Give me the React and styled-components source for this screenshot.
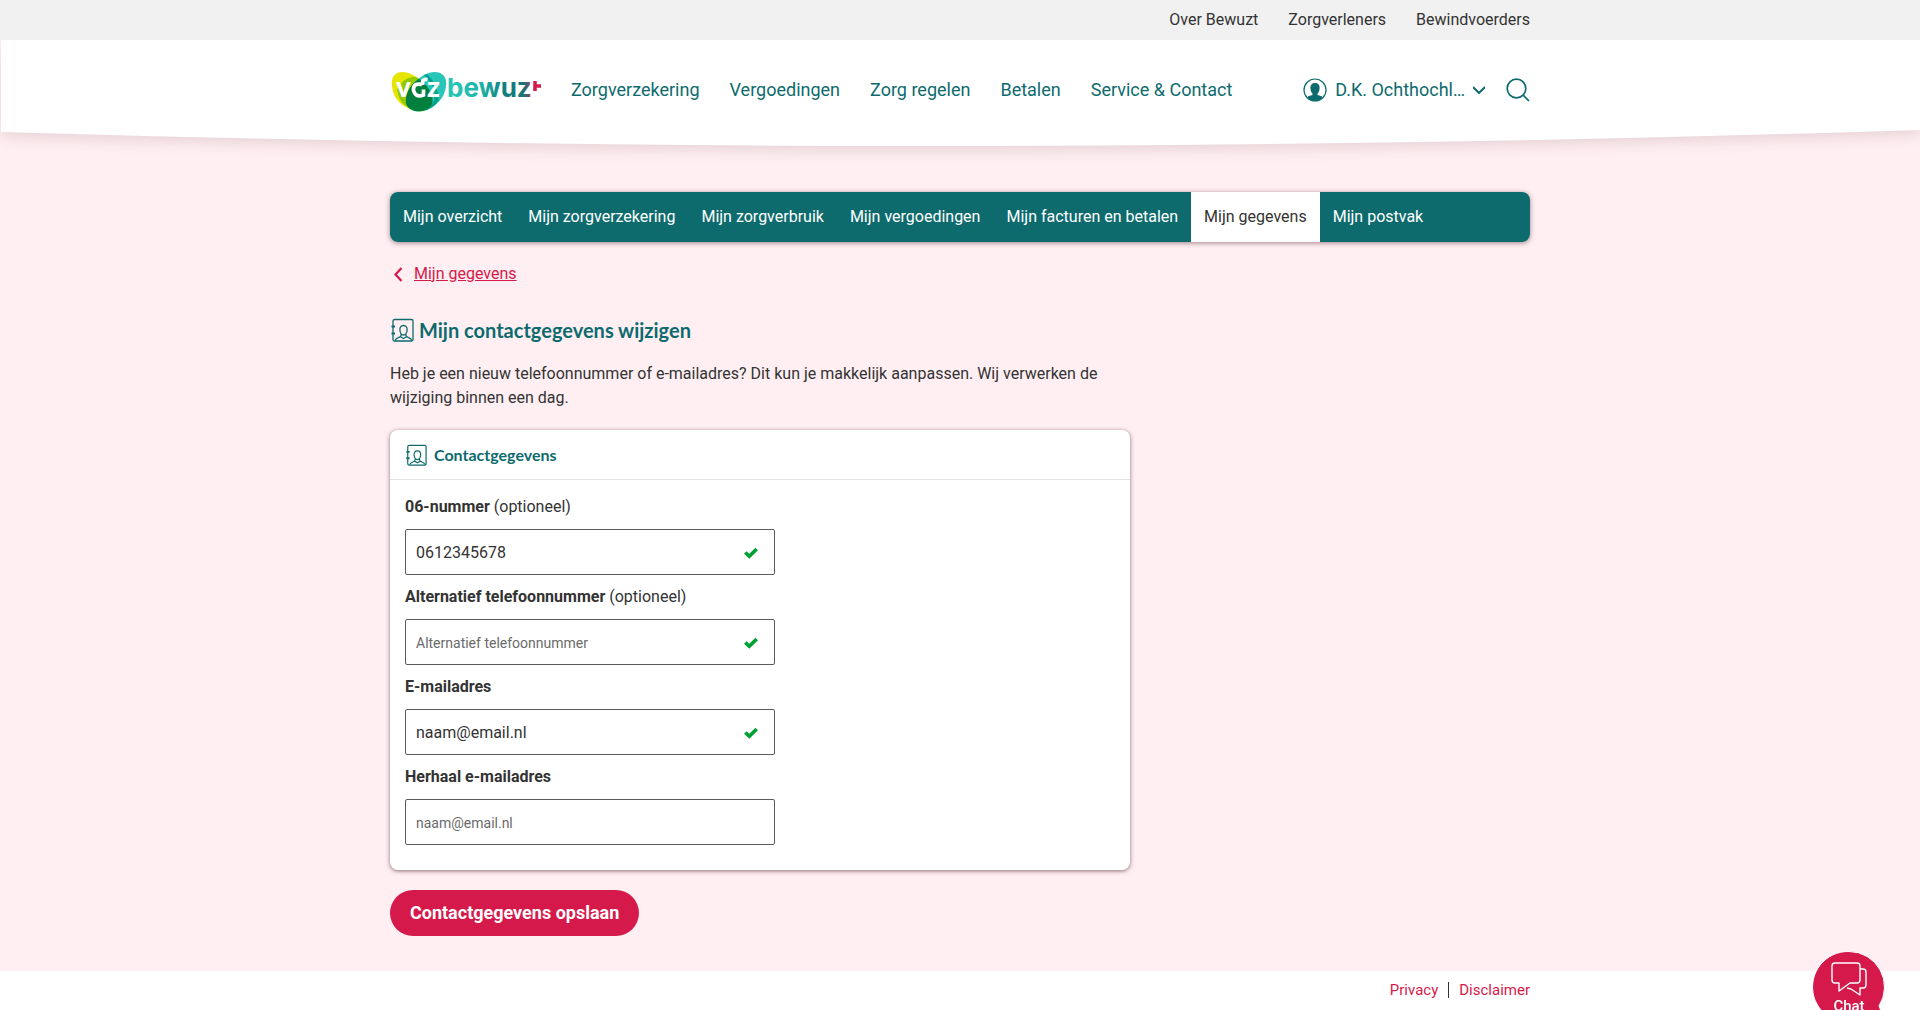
import React from "react";
import styled, { createGlobalStyle, css } from "styled-components";

const teal = "#0d6b6e";
const red = "#d51a4b";
const ink = "#333333";
const blush = "#ffeff2";

const GlobalStyle = createGlobalStyle`
  *, *::before, *::after { box-sizing: border-box; }
  html, body, #root { height: 100%; }
  body {
    margin: 0;
    background: #fff;
    color: ${ink};
    font: 400 16px/24px Roboto, "Liberation Sans", sans-serif;
  }
  a { color: inherit; text-decoration: none; }
  h1, h2, p { margin: 0; }
`;

const Page = styled.div`
  display: flex;
  flex-direction: column;
  min-height: 100%;
  overflow: hidden;
`;

const Container = styled.div`
  width: 100%;
  max-width: 1140px;
  margin: 0 auto;
`;

const TopBar = styled.div`
  background: #f1f1f1;
`;

const TopLinks = styled(Container)`
  display: flex;
  justify-content: flex-end;
  align-items: center;
  gap: 30px;
  height: 40px;
`;

const Header = styled.header`
  position: relative;
  height: 106px;
`;

const Curve = styled.svg`
  position: absolute;
  inset: 0;
  width: 100%;
  height: 100%;
  overflow: visible;
  clip-path: inset(0 0 -40px 0);
  path { fill: #fff; filter: drop-shadow(0 5px 7px rgba(60, 20, 30, 0.12)); }
`;

const HeaderRow = styled(Container)`
  position: relative;
  display: flex;
  align-items: center;
  height: 100px;
  color: ${teal};
  font-size: 18px;
`;

const LogoLink = styled.a`
  display: flex;
  margin-right: 30px;
`;

const LogoText = styled.text`
  font-family: ${(p) => (p.$mark ? "Lato" : "Inter")}, sans-serif;
  font-size: ${(p) => p.$size}px;
  font-weight: ${(p) => (p.$mark ? 900 : 700)};
`;

const MainNav = styled.nav`
  display: flex;
  gap: 30px;
  flex: 1;
`;

const AccountButton = styled.button`
  display: flex;
  align-items: center;
  gap: 8px;
  padding: 0;
  border: 0;
  background: none;
  color: inherit;
  font: inherit;
  svg { display: block; }
`;

const SearchButton = styled(AccountButton)`
  margin-left: 21px;
`;

const Main = styled.main`
  flex: 1;
  background: ${blush};
  padding: 46px 0 35px;
`;

const Tabs = styled.nav`
  display: flex;
  height: 50px;
  overflow: hidden;
  border-radius: 8px;
  background: ${teal};
`;

const TabsShadow = styled.div`
  border-radius: 8px;
  box-shadow: 0 1px 5px rgba(60, 20, 30, 0.5);
`;

const Tab = styled.a`
  display: flex;
  align-items: center;
  padding: 0 13px;
  color: #fff;
  ${(p) => p.$active && css`
    background: #fff;
    color: ${ink};
  `}
`;

const BackLink = styled.a`
  display: inline-flex;
  align-items: center;
  gap: 8px;
  margin-top: 20px;
  color: ${red};
  span { text-decoration: underline; }
`;

const Title = styled.h1`
  display: flex;
  align-items: center;
  gap: 5px;
  margin-top: 25px;
  color: ${teal};
  font: 700 20px/32px Lato, "Open Sans", sans-serif;
`;

const Column = styled.div`
  max-width: 740px;
`;

const Intro = styled.p`
  margin-top: 16px;
`;

const Card = styled.section`
  margin: 20px 0;
  padding-bottom: 25px;
  border-radius: 8px;
  background: #fff;
  box-shadow: 0 1px 4px rgba(60, 20, 30, 0.6);
`;

const CardTitle = styled.h2`
  display: flex;
  align-items: center;
  gap: 7px;
  height: 50px;
  padding: 0 15px;
  border-bottom: 1px solid #e3e3e3;
  color: ${teal};
  font: 700 16px/24px Lato, "Open Sans", sans-serif;
`;

const Fields = styled.div`
  display: flex;
  flex-direction: column;
  gap: 10px;
  max-width: 400px;
  padding: 15px 15px 0;
`;

const Label = styled.label`
  display: block;
  margin-bottom: 10px;
`;

const Strong = styled.strong`
  font-weight: 700;
`;

const InputWrap = styled.div`
  position: relative;
`;

const Input = styled.input`
  display: block;
  width: 100%;
  height: 46px;
  padding: 0 40px 0 10px;
  border: 1px solid #5b5b5b;
  border-radius: 2px;
  background: #fff;
  color: ${ink};
  font: inherit;
  &::placeholder { color: #6b6b6b; opacity: 1; font-size: 14px; }
`;

const Valid = styled.svg`
  position: absolute;
  right: 17px;
  top: 18px;
`;

const SaveButton = styled.button`
  display: block;
  height: 46px;
  padding: 0 20px;
  border: 0;
  border-radius: 23px;
  background: ${red};
  color: #fff;
  font: 700 18px/24px Roboto, sans-serif;
`;

const Footer = styled.footer`
  padding-bottom: 2px;
  background: #fff;
`;

const FooterLinks = styled(Container)`
  display: flex;
  justify-content: flex-end;
  align-items: center;
  gap: 10px;
  height: 37px;
  color: ${red};
  font-size: 15px;
`;

const Divider = styled.span`
  width: 1px;
  height: 16px;
  background: ${ink};
`;

const ChatButton = styled.button`
  position: fixed;
  right: 36px;
  bottom: -12px;
  display: flex;
  flex-direction: column;
  align-items: center;
  width: 70px;
  height: 70px;
  padding: 10px 0 0;
  border: 0;
  background: none;
  color: #fff;
  font: 500 15px/20px Roboto, sans-serif;
  > * { position: relative; }
`;

const Bubble = styled.svg`
  && { position: absolute; left: -1px; top: -1px; }
`;

const Logo = () => (
  <svg width="151" height="46" viewBox="0 0 151 46" role="img" aria-label="VGZ bewuzt">
    <defs>
      <clipPath id="leftLeaf"><path d="M2 17C0 3 12 0 23 6C39 15 46 28 41 37C35 43 30 43 25 42C11 38 3 29 2 17Z" /></clipPath>
      <linearGradient id="word" gradientUnits="userSpaceOnUse" x1="58" y1="0" x2="150" y2="0">
        <stop offset="0" stopColor="#27c6b8" />
        <stop offset="0.35" stopColor="#1fb5aa" />
        <stop offset="0.6" stopColor="#11827f" />
        <stop offset="0.82" stopColor="#167477" />
        <stop offset="0.9" stopColor="#8a4565" />
      </linearGradient>
    </defs>
    <g transform="translate(0 2)">
      <path d="M2 17C0 3 12 0 23 6C39 15 46 28 41 37C35 43 30 43 25 42C11 38 3 29 2 17Z" fill="#e6e500" />
      <path d="M56 17C58 3 45 0 34 6C19 15 12 28 17 37C22 43 28 43 33 42C46 38 55 29 56 17Z" fill="#27c6b8" />
      <path d="M34 6Q45 17 45 27Q44 37 33 42Q44 40 49 31Q48 16 37 5Z" fill="#00a38c" />
      <g clipPath="url(#leftLeaf)">
        <path d="M56 17C58 3 45 0 34 6C19 15 12 28 17 37C22 43 28 43 33 42C46 38 55 29 56 17Z" fill="#00803e" />
        <path d="M7 21C12 9 23 6 29 9Q15 17 15 36Q9 30 7 21Z" fill="#93c900" />
      </g>
      <path d="M8 19Q15 7 29 9Q14 19 16 37Q7 31 8 19Z" fill="#93c900" />
    </g>
    <LogoText $mark $size={28} x="6" y="30" fill="#fff">v</LogoText>
    <LogoText $mark $size={28} x="37" y="30" fill="#fff">z</LogoText>
    <path d="M32 17.500Q23 15.500 23.500 23Q25 31 33.500 28V22.500M33 18Q31 11.500 37.500 12.500" fill="none" stroke="#fff" strokeWidth="3.700" />
    <LogoText $size={26} x="57" y="30" fill="url(#word)">bewuz</LogoText>
    <path d="M145 14V24M145 19H151" fill="none" stroke={red} strokeWidth="3.500" />
  </svg>
);

const ContactIcon = ({ size }) => (
  <svg width={size} height={size} viewBox="0 0 24 24" fill="none" stroke={teal} strokeWidth="1.300" aria-hidden="true">
    <rect x="3" y="1.500" width="20" height="21.500" rx="1.500" />
    <path d="M1.500 8.500H5M1.500 15.500H5" strokeWidth="2" />
    <path d="M13.500 7.500C10.800 7.500 9.700 9.500 9.900 12C10.100 14.500 11.500 17 13.500 17C15.500 17 16.900 14.500 17.100 12C17.300 9.500 16.200 7.500 13.500 7.500Z" />
    <path d="M5 22.500C6 20 8.500 19.700 10.500 18.700L11.500 16M22 22.500C21 20 18.500 19.700 16.500 18.700L15.500 16M10.500 18.700L13.500 20.500L16.500 18.700" />
  </svg>
);

const Check = () => (
  <Valid width="14" height="12" viewBox="0 0 14 12" aria-hidden="true">
    <path d="M1.300 5.500L5.300 9.300L12.700 2" fill="none" stroke="#00a032" strokeWidth="3.600" />
  </Valid>
);

const fields = [
  { id: "mobile", type: "tel", label: "06-nummer", optional: true, value: "0612345678", valid: true },
  { id: "phone", type: "tel", label: "Alternatief telefoonnummer", optional: true, placeholder: "Alternatief telefoonnummer", valid: true },
  { id: "email", type: "email", label: "E-mailadres", value: "naam@email.nl", valid: true },
  { id: "email-repeat", type: "email", label: "Herhaal e-mailadres", placeholder: "naam@email.nl" },
];

const Field = ({ id, type, label, optional, value, placeholder, valid }) => (
  <div>
    <Label htmlFor={id}><Strong>{label}</Strong>{optional && " (optioneel)"}</Label>
    <InputWrap>
      <Input id={id} type={type} defaultValue={value} placeholder={placeholder} />
      {valid && <Check />}
    </InputWrap>
  </div>
);

const topLinks = ["Over Bewuzt", "Zorgverleners", "Bewindvoerders"];
const mainLinks = ["Zorgverzekering", "Vergoedingen", "Zorg regelen", "Betalen", "Service & Contact"];
const tabs = ["Mijn overzicht", "Mijn zorgverzekering", "Mijn zorgverbruik", "Mijn vergoedingen", "Mijn facturen en betalen", "Mijn gegevens", "Mijn postvak"];

export default function App() {
  return (
    <Page>
      <GlobalStyle />
      <TopBar>
        <TopLinks as="nav">{topLinks.map((t) => <a href="#" key={t}>{t}</a>)}</TopLinks>
      </TopBar>
      <Header>
        <Curve viewBox="0 0 1920 106" preserveAspectRatio="none" aria-hidden="true">
          <rect width="1920" height="106" fill={blush} />
          <path d="M1 0H1920V90Q960 121 1 92Z" />
        </Curve>
        <HeaderRow>
          <LogoLink href="#"><Logo /></LogoLink>
          <MainNav>{mainLinks.map((t) => <a href="#" key={t}>{t}</a>)}</MainNav>
          <AccountButton type="button">
            <svg width="24" height="24" viewBox="0 0 24 24" aria-hidden="true">
              <circle cx="12" cy="12" r="11" fill="#fff" stroke={teal} strokeWidth="1.200" />
              <path d="M12 5C8.500 5 7 7.500 7.500 11C7.700 13.500 8.500 14.500 9.500 15.500V17C7 18 5 18 4 19.500Q7 23 12 23Q17 23 20 19.500C19 18 17 18 14.500 17V15.500C15.500 14.500 16.300 13.500 16.500 11C17 7.500 15.500 5 12 5Z" fill={teal} />
            </svg>
            D.K. Ochthochl…
            <svg width="12" height="8" viewBox="0 0 12 8" fill="none" stroke={teal} strokeWidth="2" aria-hidden="true"><path d="M0 1L6 7L12 1" /></svg>
          </AccountButton>
          <SearchButton type="button" aria-label="Zoeken">
            <svg width="24" height="24" viewBox="0 0 24 24" fill="none" stroke={teal} strokeWidth="1.700" aria-hidden="true"><circle cx="10.500" cy="10.500" r="9.300" /><path d="M17 17L23 23" /></svg>
          </SearchButton>
        </HeaderRow>
      </Header>
      <Main>
        <Container>
          <TabsShadow>
            <Tabs>{tabs.map((t) => <Tab href="#" key={t} $active={t === "Mijn gegevens"}>{t}</Tab>)}</Tabs>
          </TabsShadow>
          <BackLink href="#">
            <svg width="16" height="16" viewBox="0 0 16 16" fill="none" stroke={red} strokeWidth="2.200" aria-hidden="true"><path d="M11.500 2L5.500 8.500L11.500 15" /></svg>
            <span>Mijn gegevens</span>
          </BackLink>
          <Column>
            <Title><ContactIcon size={24} />Mijn contactgegevens wijzigen</Title>
            <Intro>Heb je een nieuw telefoonnummer of e-mailadres? Dit kun je makkelijk aanpassen. Wij verwerken de wijziging binnen een dag.</Intro>
            <form onSubmit={(e) => e.preventDefault()}>
              <Card>
                <CardTitle><ContactIcon size={22} />Contactgegevens</CardTitle>
                <Fields>{fields.map((f) => <Field key={f.id} {...f} />)}</Fields>
              </Card>
              <SaveButton type="submit">Contactgegevens opslaan</SaveButton>
            </form>
          </Column>
        </Container>
      </Main>
      <Footer>
        <FooterLinks><a href="#">Privacy</a><Divider /><a href="#">Disclaimer</a></FooterLinks>
      </Footer>
      <ChatButton type="button">
        <Bubble width="72" height="72" viewBox="0 0 72 72" aria-hidden="true">
          <path d="M36 0.500A35.500 35.500 0 1 0 54 66L72 70L66 55A35.500 35.500 0 0 0 36 0.500Z" fill={red} stroke="#fff" />
        </Bubble>
        <svg width="36" height="34" viewBox="0 0 36 34" fill="none" stroke="#fff" strokeWidth="1.400" strokeLinejoin="round" aria-hidden="true">
          <path d="M4 1H26Q29 1 29 4V18Q29 21 26 21H19L8 29V21H4Q1 21 1 18V4Q1 1 4 1Z" />
          <path d="M29 7H32Q35 7 35 10V23Q35 26 32 26H29V33L20 27L16 26" />
        </svg>
        <span>Chat</span>
      </ChatButton>
    </Page>
  );
}
